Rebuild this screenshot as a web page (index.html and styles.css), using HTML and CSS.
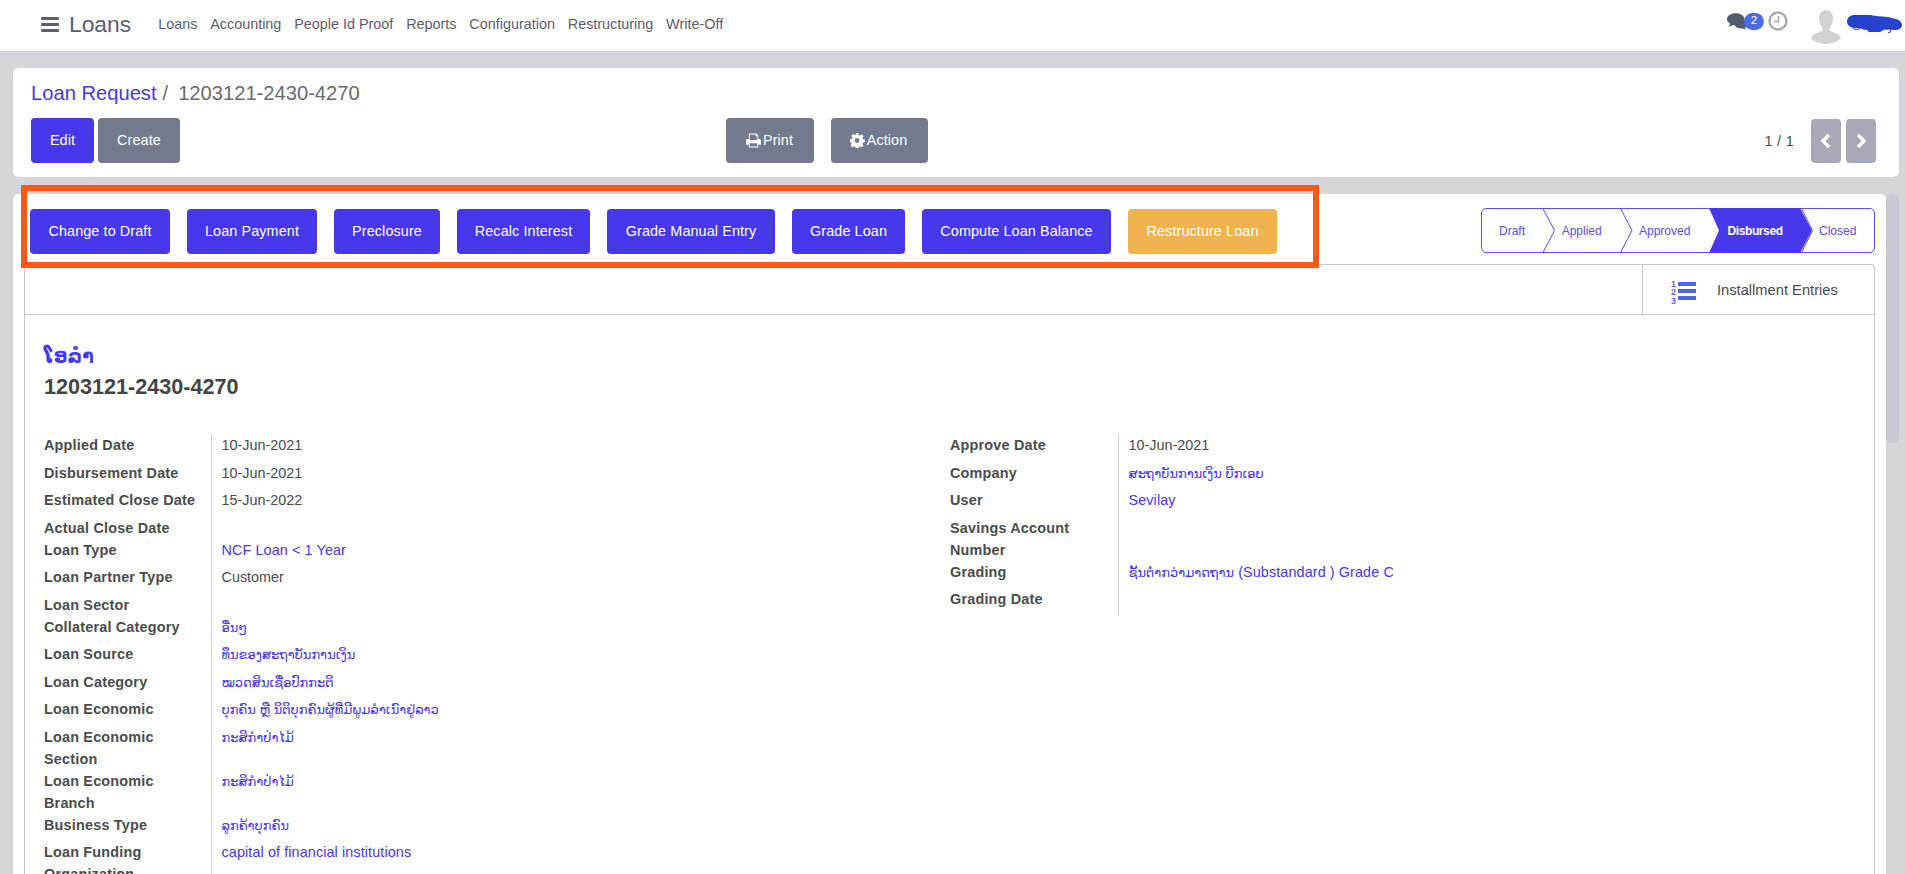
FILE: index.html
```html
<!DOCTYPE html>
<html lang="en">
<head>
<meta charset="utf-8">
<title>Loan Request</title>
<link rel="stylesheet" href="styles.css">
</head>
<body>
<header class="navbar">
  <svg class="burger" viewBox="0 0 18 15"><rect y="0" width="18" height="3" rx="1"/><rect y="6" width="18" height="3" rx="1"/><rect y="12" width="18" height="3" rx="1"/></svg>
  <span class="brand">Loans</span>
  <nav class="menu">
    <a>Loans</a><a>Accounting</a><a>People Id Proof</a><a>Reports</a><a>Configuration</a><a>Restructuring</a><a>Write-Off</a>
  </nav>
  <div class="systray">
    <span class="chat">
      <svg class="chat-icon" viewBox="0 0 24 20"><path class="chat-back" d="M15 6c5 0 8 2.500 8 5.500 0 2-1.300 3.500-3 4.500l2 3-5-2c-4 .5-8-1-9-4z"/><path class="chat-front" d="M9.500 0C14.700 0 19 2.800 19 6.500S14.700 13 9.500 13c-1 0-2-.1-3-.4L2 15l1.200-4C1.200 9.800 0 8.300 0 6.500 0 2.800 4.300 0 9.500 0z"/></svg>
      <span class="badge">2</span>
    </span>
    <svg class="clock" viewBox="0 0 20 20"><circle cx="10" cy="10" r="8.500"/><path d="M10.500 5v5.500H6"/></svg>
    <svg class="avatar" viewBox="0 0 30 34"><path d="M15 0c4.500 0 7 3.500 7 8.500 0 4-1.500 7-3.300 9.500-.7 1.500 0 3 2 3.800C26 23.500 29 25 30 28c-3 3.800-9 6-15 6S3 31.800 0 28c1-3 4-4.500 9.300-6.200 2-.8 2.700-2.300 2-3.800C9.500 15.500 8 12.500 8 8.500 8 3.500 10.500 0 15 0z"/></svg>
    <span class="user">
      <span class="user-name">Sevilay</span>
      <svg class="scribble" viewBox="0 0 55 17"><path d="M7 0h16l6 1 12 1 8 2c4 1 6 4 6 6 0 3-3 5-7 5l-10-1-5 3H22l-3-3-11-1C3 13 0 10 0 6.500 0 3 3 0 7 0z"/></svg>
    </span>
  </div>
</header>

<main class="content">
  <section class="control-panel">
    <div class="breadcrumb"><a>Loan Request</a><span class="crumb-sep">/</span>1203121-2430-4270</div>
    <div class="actions">
      <div class="action-group">
        <button class="btn btn-primary btn-edit">Edit</button>
        <button class="btn btn-secondary btn-create">Create</button>
      </div>
      <div class="action-group action-mid">
        <button class="btn btn-secondary btn-print">
          <svg class="btn-icon" viewBox="0 0 16 15"><path d="M3 0h8l2 2v4h1.500c.8 0 1.500.7 1.500 1.500V12h-3v3H3v-3H0V7.500C0 6.700.7 6 1.500 6H3zm1 1v6h8V3h-2V1zm0 9.500V14h8v-3.500z" fill-rule="evenodd"/></svg>Print
        </button>
        <button class="btn btn-secondary btn-action">
          <svg class="btn-icon" viewBox="0 0 16 16"><path d="M6.500 0h3l.4 2.200 1.500.6L13.300 1.500l2.100 2.200-1.300 1.900.6 1.500 2.300.4v3l-2.300.4-.6 1.500 1.300 1.900-2.100 2.100-1.900-1.300-1.500.6-.4 2.300h-3l-.4-2.300-1.500-.6-1.900 1.300-2.100-2.100 1.300-1.900-.6-1.500L0 10V7l2.300-.4.600-1.500-1.300-1.900 2.100-2.200 1.900 1.300 1.500-.6zM8 5.700a2.800 2.800 0 1 0 0 5.600 2.800 2.800 0 0 0 0-5.600z" fill-rule="evenodd" transform="scale(.94)"/></svg>Action
        </button>
      </div>
      <div class="pager">
        <span class="pager-text">1 / 1</span>
        <button class="pager-btn" aria-label="Previous"><svg viewBox="0 0 12 16"><path d="M9 2 3 8l6 6"/></svg></button>
        <button class="pager-btn" aria-label="Next"><svg viewBox="0 0 12 16"><path d="m3 2 6 6-6 6"/></svg></button>
      </div>
    </div>
  </section>

  <div class="form-area">
    <section class="sheet-wrap">
      <div class="statusbar">
        <div class="status-buttons">
          <button class="btn btn-primary sb-1">Change to Draft</button>
          <button class="btn btn-primary sb-2">Loan Payment</button>
          <button class="btn btn-primary sb-3">Preclosure</button>
          <button class="btn btn-primary sb-4">Recalc Interest</button>
          <button class="btn btn-primary sb-5">Grade Manual Entry</button>
          <button class="btn btn-primary sb-6">Grade Loan</button>
          <button class="btn btn-primary sb-7">Compute Loan Balance</button>
          <button class="btn btn-warning sb-8">Restructure Loan</button>
        </div>
        <svg class="stages" viewBox="0 0 394 45" width="394" height="45">
          <path class="stage-line" d="M5 .5H389a4.500 4.500 0 0 1 4.500 4.500V40a4.500 4.500 0 0 1-4.500 4.500H5A4.500 4.500 0 0 1 .5 40V5A4.500 4.500 0 0 1 5 .5z"/>
          <path class="stage-line" d="M62 .5l11.500 22L62 44.500"/>
          <path class="stage-line" d="M139.500 .5l11.500 22-11.500 22"/>
          <path class="stage-fill" d="M228 0h91l12 22.500L319 45h-91l10-22.500z"/>
          <path class="stage-line" d="M320.500 .5l11 22-11 22"/>
          <text class="stage-text" x="18" y="26.500">Draft</text>
          <text class="stage-text" x="80.700" y="26.500">Applied</text>
          <text class="stage-text" x="158" y="26.500">Approved</text>
          <text class="stage-text stage-active" x="246.500" y="26.500">Disbursed</text>
          <text class="stage-text" x="338" y="26.500">Closed</text>
        </svg>
      </div>

      <div class="sheet">
        <div class="button-box">
          <div class="stat-button">
            <svg class="stat-icon" viewBox="0 -4 25 31">
              <text class="num" x="0" y="7.500">1</text><text class="num" x="0" y="16">2</text><text class="num" x="0" y="24.500">3</text>
              <rect x="7" y="3" width="18" height="4"/><rect x="7" y="10" width="18" height="4"/><rect x="7" y="17" width="18" height="4"/>
            </svg>
            <span class="stat-label">Installment Entries</span>
          </div>
        </div>

        <div class="sheet-body">
          <div class="title-lao">ໂອລຳ</div>
          <h1 class="title-num">1203121-2430-4270</h1>
          <div class="groups">
            <table class="group group-left">
              <tr><td class="lbl">Applied Date</td><td class="val">10-Jun-2021</td></tr>
              <tr><td class="lbl">Disbursement Date</td><td class="val">10-Jun-2021</td></tr>
              <tr><td class="lbl">Estimated Close Date</td><td class="val">15-Jun-2022</td></tr>
              <tr><td class="lbl">Actual Close Date</td><td class="val-empty"></td></tr>
              <tr><td class="lbl">Loan Type</td><td class="val link">NCF Loan &lt; 1 Year</td></tr>
              <tr><td class="lbl">Loan Partner Type</td><td class="val">Customer</td></tr>
              <tr><td class="lbl">Loan Sector</td><td class="val-empty"></td></tr>
              <tr><td class="lbl">Collateral Category</td><td class="val link"><span class="lao">ອື່ນໆ</span></td></tr>
              <tr><td class="lbl">Loan Source</td><td class="val link"><span class="lao">ທຶນຂອງສະຖາບັນການເງິນ</span></td></tr>
              <tr><td class="lbl">Loan Category</td><td class="val link"><span class="lao">ໝວດສິນເຊື່ອປົກກະຕິ</span></td></tr>
              <tr><td class="lbl">Loan Economic</td><td class="val link"><span class="lao">ບຸກຄົນ ຫຼື ນິຕິບຸກຄົນຜູ້ທີ່ມີພູມລຳເນົາຢູ່ລາວ</span></td></tr>
              <tr><td class="lbl">Loan Economic Section</td><td class="val link"><span class="lao">ກະສິກຳປ່າໄມ້</span></td></tr>
              <tr><td class="lbl">Loan Economic Branch</td><td class="val link"><span class="lao">ກະສິກຳປ່າໄມ້</span></td></tr>
              <tr><td class="lbl">Business Type</td><td class="val link"><span class="lao">ລູກຄ້າບຸກຄົນ</span></td></tr>
              <tr><td class="lbl">Loan Funding Organization</td><td class="val link">capital of financial institutions</td></tr>
            </table>
            <table class="group group-right">
              <tr><td class="lbl">Approve Date</td><td class="val">10-Jun-2021</td></tr>
              <tr><td class="lbl">Company</td><td class="val link"><span class="lao">ສະຖາບັນການເງິນ ບີກເອບ</span></td></tr>
              <tr><td class="lbl">User</td><td class="val link">Sevilay</td></tr>
              <tr><td class="lbl">Savings Account Number</td><td class="val-empty"></td></tr>
              <tr><td class="lbl">Grading</td><td class="val link"><span class="lao">ຊັ້ນຕ່ຳກວ່າມາດຖານ</span> (Substandard ) Grade C</td></tr>
              <tr><td class="lbl">Grading Date</td><td class="val-empty tall"></td></tr>
            </table>
          </div>
        </div>
      </div>
      <div class="highlight"></div>
    </section>
    <div class="scrollbar"><div class="thumb"></div></div>
  </div>
</main>
</body>
</html>
```

FILE: styles.css
```css
* { box-sizing: border-box; }
html, body { margin: 0; height: 100%; overflow: hidden; }
body {
  background: #d6d6da;
  font-family: "Liberation Sans", "DejaVu Sans", sans-serif;
  font-size: 14.4px;
  line-height: 22px;
  color: #4c4c4c;
  display: flex;
  flex-direction: column;
}

/* top bar */
.navbar {
  height: 51px;
  flex: none;
  background: #fff;
  display: flex;
  align-items: center;
  padding-left: 41px;
  color: #5b6070;
}
.burger { width: 18px; height: 15px; fill: #5b6070; margin-bottom: 3px; }
.brand { font-size: 22.800px; margin-left: 10px; margin-bottom: 4px; }
.menu { display: flex; gap: 12.800px; margin-left: 27px; margin-bottom: 4px; }
.systray { margin-left: auto; display: flex; align-items: center; position: relative; height: 51px; width: 178px; flex: none; }
.chat { position: relative; width: 36px; height: 20px; margin-top: -5px; }
.chat-icon { position: absolute; left: 0; top: 0; width: 22px; height: 19px; }
.chat-front { fill: #555c70; }
.chat-back { fill: #555c70; stroke: #fff; stroke-width: 1; }
.badge {
  position: absolute; left: 17px; top: 0;
  width: 20px; height: 17px; border-radius: 9px;
  background: #4e6be6; color: #fff;
  font-size: 11.500px; line-height: 15px; text-align: center;
}
.clock { width: 20px; height: 20px; margin-left: 5px; margin-top: -9px; fill: none; stroke: #a5a7b4; stroke-width: 2.400; }
.clock path { stroke-width: 1.500; }
.avatar { width: 30px; height: 34px; fill: #d2d2d2; margin-left: 23px; margin-top: 3px; }
.user { position: relative; margin-left: 6px; width: 55px; height: 17px; margin-top: -4px; }
.user-name { position: absolute; left: 5px; top: 2px; font-size: 13px; line-height: 17px; color: #4c4c4c; }
.scribble { position: absolute; inset: 0; fill: #2742cf; }

/* page */
.content { flex: 1; min-height: 0; padding: 17px 6px 0 13px; display: flex; flex-direction: column; gap: 17px; }
.control-panel { flex: none; height: 109px; background: #fff; border-radius: 6px; padding: 0 18px; }
.breadcrumb { font-size: 20.160px; line-height: 26px; padding-top: 12px; height: 50px; color: #6c6c6c; }
.breadcrumb a { color: #4838ec; }
.crumb-sep { margin: 0 10px 0 6px; }
.actions { display: grid; grid-template-columns: 695px auto 1fr; align-items: center; }
.action-group { display: flex; gap: 4px; }
.action-mid { gap: 17px; }

.btn {
  height: 45px; border: 0; border-radius: 4px; padding: 0 0 1px;
  font: inherit; color: #fff; letter-spacing: .1px;
  display: inline-flex; align-items: center; justify-content: center;
}
.btn-primary { background: #4838ec; }
.btn-secondary { background: #747a8e; }
.btn-warning { background: #f0b44f; }
.btn-edit { width: 63px; }
.btn-create { width: 82px; }
.btn-print { width: 88px; padding-right: 1px; }
.btn-action { width: 97px; padding-right: 2px; }
.btn-icon { width: 15px; height: 15px; fill: #fff; margin-right: 2px; }

.pager { display: flex; align-items: center; justify-content: flex-end; gap: 5px; padding-right: 5px; }
.pager-text { color: #4c4c4c; margin-right: 12px; letter-spacing: .3px; }
.pager-btn { width: 30px; height: 44px; border: 0; border-radius: 4px; background: #a7a9b6; padding: 0; display: flex; align-items: center; justify-content: center; }
.pager-btn svg { width: 12px; height: 16px; fill: none; stroke: #fff; stroke-width: 3.400; }

.form-area { flex: 1; min-height: 0; display: flex; }
.sheet-wrap { position: relative; flex: 1; min-width: 0; background: #fff; border-radius: 6px 6px 0 0; padding: 0 11px; display: flex; flex-direction: column; }
.scrollbar { width: 13px; flex: none; background: #d6d6da; }
.thumb { height: 249px; background: #c8c9d4; border-radius: 6px; }

.statusbar { height: 70px; flex: none; display: flex; align-items: flex-start; justify-content: space-between; padding-top: 15px; }
.status-buttons { display: flex; gap: 17px; margin-left: 6px; }
.statusbar .stages { margin-top: -1px; flex: none; }
.sb-1 { width: 140px; } .sb-2 { width: 130px; } .sb-3 { width: 106px; } .sb-4 { width: 133px; }
.sb-5 { width: 168px; } .sb-6 { width: 113px; } .sb-7 { width: 189px; } .sb-8 { width: 149px; }

.stage-line { fill: none; stroke: #5a4ff0; stroke-width: 1; }
.stage-fill { fill: #4838ec; }
.stage-text { font-size: 12px; fill: #5a50e8; }
.stage-active { fill: #fff; font-weight: 700; letter-spacing: -.4px; }

.sheet { flex: 1; min-height: 0; overflow: hidden; border: 1px solid #c8c9d4; border-bottom: 0; border-radius: 4px 4px 0 0; }
.button-box { height: 50px; border-bottom: 1px solid #c8c9d4; display: flex; justify-content: flex-end; }
.stat-button { width: 232px; border-left: 1px solid #c8c9d4; display: flex; align-items: center; padding: 1px 0 0 28px; gap: 21px; color: #4c4c4c; }
.stat-icon { width: 25px; height: 31px; fill: #4e64e6; }
.num { font-size: 9px; font-weight: 700; fill: #6a63e8; }
.stat-label { font-size: 14.700px; }

.sheet-body { padding: 26px 19px 0; }
.title-lao { font-size: 19px; line-height: 31px; color: #4838ec; font-weight: 700; }
.title-num { margin: 0; font-size: 21.600px; line-height: 30px; font-weight: 700; color: #444; }
.groups { display: grid; grid-template-columns: 906px 1fr; margin-top: 32px; align-items: start; }
.group { border-collapse: collapse; }
.group td { padding: 0; vertical-align: top; line-height: 22px; }
.lbl { font-weight: 700; width: 167px; padding-right: 8px !important; border-right: 1px solid #d6d6da; color: #4c4c4c; letter-spacing: .2px; }
.val { padding: 0 0 5.500px 10px !important; }
.val-empty { padding: 0; }
.val-empty.tall { height: 27.500px; }
.link { color: #4838ec; letter-spacing: .1px; }
.lao { font-size: 13px; line-height: 1; letter-spacing: 0; }
.group-right .lbl { width: 168px; padding-right: 30px !important; }

.highlight { position: absolute; left: 8px; top: -9px; width: 1298px; height: 83px; border: 6px solid #ff5a14; pointer-events: none; }
```
